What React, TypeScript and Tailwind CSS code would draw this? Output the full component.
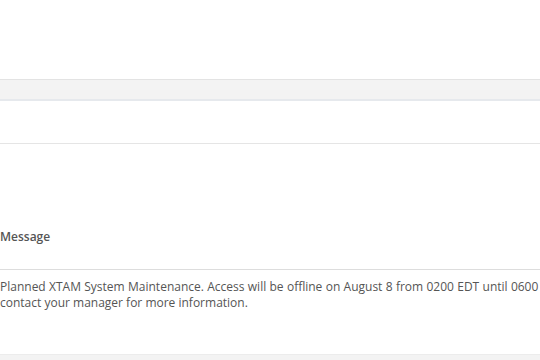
export default function App() {
  return (
    <div
      className="w-[540px] h-[360px] overflow-hidden bg-white text-[#555]"
      style={{ fontFamily: '"Open Sans", sans-serif' }}
    >
      <div className="h-[79px]" />
      {/* toolbar strip */}
      <div className="h-[22px] border-t border-[#e3e3e3] border-b-2 border-b-[#e6e9ed] bg-[#f3f3f3]" />
      <div className="h-[43px] border-b border-[#e5e5e5]" />
      <div className="h-[211px] border-b border-[#ececec]">
        <div className="pt-[80px]">
          <div className="h-[46px] border-b border-[#ddd] text-[12px] font-semibold leading-[16px] pt-[5px]">
            Message
          </div>
          <div className="pt-[9px] text-[12px] leading-[16px] whitespace-nowrap">
            <div className="[word-spacing:0.2px]">Planned XTAM System Maintenance. Access will be offline on August 8 from 0200 EDT until 0600</div>
            <div>contact your manager for more information.</div>
          </div>
        </div>
      </div>
      <div className="h-[6px] bg-[#f3f3f3]" />
    </div>
  );
}
